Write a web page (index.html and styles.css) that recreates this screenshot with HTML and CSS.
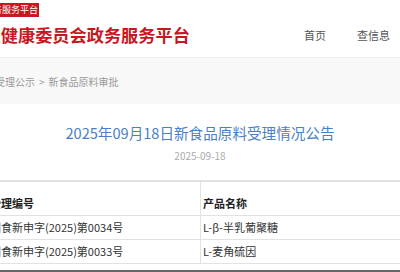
FILE: index.html
```html
<!DOCTYPE html>
<html lang="zh-CN">
<head>
  <meta charset="UTF-8" />
  <meta name="viewport" content="width=device-width, initial-scale=1" />
  <title>新食品原料受理情况公告</title>
  <link rel="stylesheet" href="styles.css">
</head>
<body>
  <div class="page">
    <header class="header">
      <div class="brand">
        <span class="badge">政务服务平台</span>
        <h1 class="site-title">国家卫生健康委员会政务服务平台</h1>
      </div>
      <nav class="nav">
        <a href="#">首页</a>
        <a href="#">查信息</a>
      </nav>
    </header>

    <div class="crumbs">
      <span>受理公示</span>
      <span class="sep">&gt;</span>
      <span>新食品原料审批</span>
    </div>

    <main class="article">
      <h2 class="article-title">2025年09月18日新食品原料受理情况公告</h2>
      <div class="article-date">2025-09-18</div>

      <table class="list">
        <thead>
          <tr>
            <th>受理编号</th>
            <th>产品名称</th>
          </tr>
        </thead>
        <tbody>
          <tr>
            <td>国食新申字(2025)第0034号</td>
            <td>L-β-半乳葡聚糖</td>
          </tr>
          <tr>
            <td>国食新申字(2025)第0033号</td>
            <td>L-麦角硫因</td>
          </tr>
        </tbody>
      </table>
      <div class="list-end"></div>
    </main>
  </div>
</body>
</html>
```

FILE: styles.css
```css
body {
  margin: 0;
  background: #fff;
  font-family: "Noto Sans CJK SC", "Noto Sans", sans-serif;
  color: #333;
  overflow: hidden;
}

.page {
  width: 470px;
  margin-left: -70px;
}

/* Header */
.header {
  display: flex;
  align-items: flex-start;
  height: 57px;
  border-bottom: 1px solid #eee;
}

.brand {
  display: flex;
  flex-direction: column;
  align-items: flex-start;
  padding-left: 2px;
}

.badge {
  margin: 3px 0 0 51px;
  padding: 0 1px;
  height: 14px;
  line-height: 14px;
  font-size: 9px;
  color: #fff;
  background: #c9161f;
}

.site-title {
  margin: 7px 0 0;
  font-size: 17.2px;
  line-height: 22px;
  font-weight: 700;
  color: #c9161f;
  white-space: nowrap;
}

.nav {
  display: flex;
  gap: 31px;
  margin: 28px 10px 0 auto;
}

.nav a {
  font-size: 11px;
  line-height: 15px;
  color: #555;
  text-decoration: none;
}

/* Breadcrumb */
.crumbs {
  display: flex;
  gap: 4px;
  align-items: center;
  height: 46px;
  padding-left: 65px;
  background: #f8f8f8;
  font-size: 10px;
  color: #999;
}

/* Article */
.article {
  padding-top: 19px;
}

.article-title {
  margin: 0;
  padding-left: 70px;
  text-align: center;
  font-size: 14.6px;
  line-height: 20px;
  font-weight: 400;
  color: #4a80c8;
}

.article-date {
  margin-top: 6px;
  padding-left: 70px;
  text-align: center;
  font-size: 10px;
  line-height: 14px;
  color: #aaa;
}

.list {
  width: 412px;
  margin: 17px 0 0 58px;
  border-collapse: collapse;
  border-top: 2px solid #e2e2e2;
  font-size: 11px;
}

.list th,
.list td {
  padding: 4px 2px;
  line-height: 15px;
  text-align: left;
  white-space: nowrap;
  border-bottom: 1px solid #e2e2e2;
}

.list th:first-child,
.list td:first-child {
  width: 208px;
  border-right: 1px solid #e2e2e2;
}

.list th {
  padding-top: 14px;
  padding-bottom: 4px;
  font-weight: 700;
  color: #222;
}

.list-end {
  margin-top: 6px;
  border-top: 2px solid #666;
}
```
